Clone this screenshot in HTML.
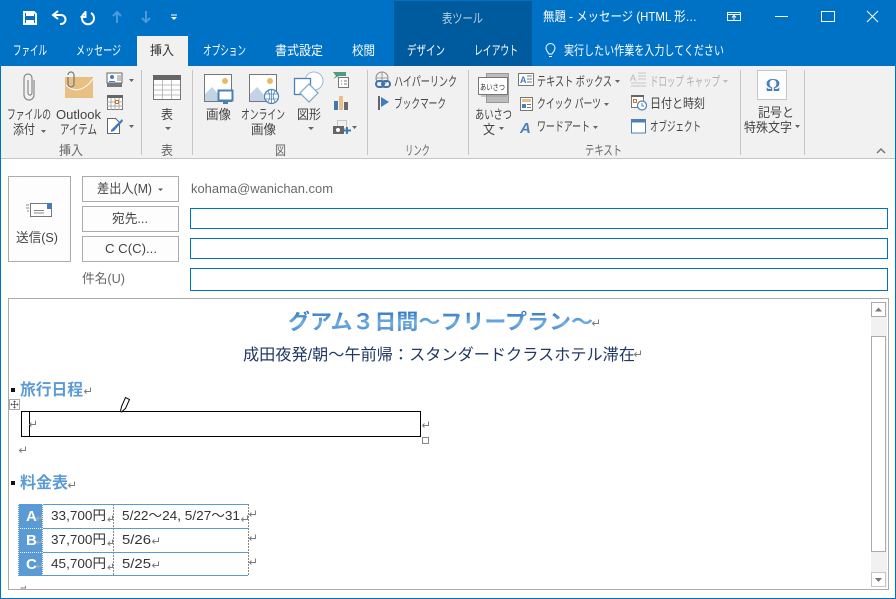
<!DOCTYPE html>
<html lang="ja"><head><meta charset="utf-8"><title>無題 - メッセージ</title>
<style>
html,body{margin:0;padding:0;background:#fff;overflow:hidden}
svg{display:block}
text{font-family:"Liberation Sans","Noto Sans CJK JP",sans-serif;font-size:13px;fill:#444;white-space:pre}
.w{fill:#fff}
.g{fill:#666}
.rm{fill:none;stroke:#7d7d7d;stroke-width:1}
</style></head><body>
<svg xmlns="http://www.w3.org/2000/svg" width="896" height="599" viewBox="0 0 896 599">
<defs>
<linearGradient id="tg" x1="0" y1="0" x2="0" y2="1"><stop offset="0" stop-color="#2a72c0"/><stop offset=".55" stop-color="#74aee2"/><stop offset="1" stop-color="#3a82ca"/></linearGradient>
</defs>
<rect width="896" height="599" fill="#fff"/>
<!-- title bar -->
<rect width="896" height="66" fill="#0072c6"/>
<rect x="394" y="1" width="138" height="65" fill="#005a9e"/>
<rect x="137" y="36" width="51" height="30" fill="#f1f1f1"/>
<!-- QAT -->
<path d="M24 12h10l2 2v10H24z" fill="none" stroke="#fff" stroke-width="2"/><rect x="26" y="11" width="8" height="5" fill="#fff"/><rect x="26" y="20" width="8" height="5" fill="#fff"/>
<path d="M58 11l-5 4 5 4M53 15h8a4.500 4.500 0 0 1 0 9h-1" fill="none" stroke="#fff" stroke-width="2"/>
<path d="M85 13a6 6 0 1 0 6 0M85.500 11v6h-5" fill="none" stroke="#fff" stroke-width="2"/>
<path d="M117 23V12M113 16l4-4 4 4" fill="none" stroke="#4c9ad6" stroke-width="2"/>
<path d="M146 11v11M142 18l4 4 4-4" fill="none" stroke="#4c9ad6" stroke-width="2"/>
<path d="M171 15h6" stroke="#fff"/><path d="M171 17h6l-3 3z" fill="#fff"/>
<text x="442" y="23" textLength="41" lengthAdjust="spacingAndGlyphs" style="fill:#b5cfe3">表ツール</text>
<text x="543" y="21" textLength="154" lengthAdjust="spacingAndGlyphs" class="w">無題 - メッセージ (HTML 形…</text>
<!-- window controls -->
<path d="M727.500 12.500h13v8h-13zM727.500 14.500h13M734 20v-4M732 17.500l2-2 2 2" fill="none" stroke="#fff"/>
<rect x="775" y="16" width="13" height="1" fill="#fff"/>
<rect x="821.500" y="11.500" width="13" height="10" fill="none" stroke="#fff" stroke-width="1"/>
<path d="M867 11l11 11M878 11l-11 11" stroke="#fff" fill="none"/>
<!-- tabs -->
<text x="13" y="55" textLength="34" lengthAdjust="spacingAndGlyphs" class="w">ファイル</text>
<text x="76" y="55" textLength="45" lengthAdjust="spacingAndGlyphs" class="w">メッセージ</text>
<text x="150" y="55" textLength="24" lengthAdjust="spacingAndGlyphs" style="fill:#333">挿入</text>
<text x="203" y="55" textLength="43" lengthAdjust="spacingAndGlyphs" class="w">オプション</text>
<text x="275" y="55" textLength="48" lengthAdjust="spacingAndGlyphs" class="w">書式設定</text>
<text x="352" y="55" textLength="23" lengthAdjust="spacingAndGlyphs" class="w">校閲</text>
<text x="407" y="55" textLength="38" lengthAdjust="spacingAndGlyphs" class="w">デザイン</text>
<text x="474" y="55" textLength="44" lengthAdjust="spacingAndGlyphs" class="w">レイアウト</text>
<path d="M549 54c-1-2-3-3-3-6a4.500 4.500 0 0 1 9 0c0 3-2 4-3 6zM549 56.500h3" fill="none" stroke="#fff"/>
<text x="564" y="55" textLength="160" lengthAdjust="spacingAndGlyphs" class="w">実行したい作業を入力してください</text>
<!-- ribbon -->
<rect y="66" width="896" height="93" fill="#f1f1f1"/>
<rect y="158" width="896" height="1" fill="#c6c6c6"/>
<g fill="#c6c6c6"><rect x="141" y="70" width="1" height="85"/><rect x="192" y="70" width="1" height="85"/><rect x="367" y="70" width="1" height="85"/><rect x="468" y="70" width="1" height="85"/><rect x="740" y="70" width="1" height="85"/><rect x="804" y="70" width="1" height="85"/></g>
<!-- ribbon text -->
<text x="7" y="119" textLength="44" lengthAdjust="spacingAndGlyphs">ファイルの</text>
<text x="13" y="134" textLength="22" lengthAdjust="spacingAndGlyphs">添付</text>
<text x="56" y="119" textLength="45" lengthAdjust="spacingAndGlyphs">Outlook</text>
<text x="60" y="134" textLength="37" lengthAdjust="spacingAndGlyphs">アイテム</text>
<text x="59" y="155" textLength="24" lengthAdjust="spacingAndGlyphs" class="g">挿入</text>
<text x="161" y="119" textLength="12" lengthAdjust="spacingAndGlyphs">表</text>
<text x="161" y="155" textLength="12" lengthAdjust="spacingAndGlyphs" class="g">表</text>
<text x="206" y="119" textLength="25" lengthAdjust="spacingAndGlyphs">画像</text>
<text x="241" y="119" textLength="44" lengthAdjust="spacingAndGlyphs">オンライン</text>
<text x="251" y="134" textLength="25" lengthAdjust="spacingAndGlyphs">画像</text>
<text x="297" y="119" textLength="24" lengthAdjust="spacingAndGlyphs">図形</text>
<text x="275" y="155" textLength="11" lengthAdjust="spacingAndGlyphs" class="g">図</text>
<text x="394" y="86" textLength="63" lengthAdjust="spacingAndGlyphs">ハイパーリンク</text>
<text x="394" y="108" textLength="52" lengthAdjust="spacingAndGlyphs">ブックマーク</text>
<text x="405" y="155" textLength="25" lengthAdjust="spacingAndGlyphs" class="g">リンク</text>
<text x="475" y="119" textLength="37" lengthAdjust="spacingAndGlyphs">あいさつ</text>
<text x="483" y="134" textLength="12" lengthAdjust="spacingAndGlyphs">文</text>
<text x="537" y="86" textLength="75" lengthAdjust="spacingAndGlyphs">テキスト ボックス</text>
<text x="537" y="108" textLength="64" lengthAdjust="spacingAndGlyphs">クイック パーツ</text>
<text x="537" y="131" textLength="53" lengthAdjust="spacingAndGlyphs">ワードアート</text>
<text x="585" y="155" textLength="37" lengthAdjust="spacingAndGlyphs" class="g">テキスト</text>
<text x="650" y="86" textLength="70" lengthAdjust="spacingAndGlyphs" style="fill:#b0b0b0">ドロップ キャップ</text>
<text x="650" y="108" textLength="55" lengthAdjust="spacingAndGlyphs">日付と時刻</text>
<text x="650" y="131" textLength="51" lengthAdjust="spacingAndGlyphs">オブジェクト</text>
<text x="758" y="117" textLength="36" lengthAdjust="spacingAndGlyphs">記号と</text>
<text x="744" y="132" textLength="48" lengthAdjust="spacingAndGlyphs">特殊文字</text>
<!-- dropdown arrows -->
<g fill="#666">
<path d="M41 130h5l-2.500 3z"/><path d="M165 127h6l-3 3z"/><path d="M129 79h5l-2.500 3z"/><path d="M129 125h5l-2.500 3z"/>
<path d="M308 127h6l-3 3z"/><path d="M352 126h5l-2.500 3z"/><path d="M499 127h5l-2.500 3z"/><path d="M615 80h5l-2.500 3z"/>
<path d="M604 103h5l-2.500 3z"/><path d="M593 126h5l-2.500 3z"/><path d="M795 125h5l-2.500 3z"/>
</g>
<path d="M723 80h5l-2.500 3z" fill="#bbb"/>
<path d="M877 153l4-4 4 4" fill="none" stroke="#777" stroke-width="1.500"/>
<!-- paperclip -->
<path d="M34 80v15a5 5 0 0 1-10 0V78a4 4 0 0 1 8 0v15a2 2 0 0 1-4 0V80" fill="none" stroke="#8a8a8a" stroke-width="1.200"/>
<!-- envelope -->
<rect x="65" y="77" width="28" height="21" fill="#e9c083"/>
<path d="M66 85c8 8 18 6 27-6" fill="none" stroke="#fff" stroke-width="1"/>
<path d="M68 75a3 3 0 0 1 6 0v9a3 3 0 0 1-6 0v-7" fill="none" stroke="#777" stroke-width="1.200"/>
<!-- card -->
<rect x="107" y="73" width="15" height="10" fill="#fff" stroke="#666"/><rect x="107" y="83" width="15" height="4" fill="#777"/><circle cx="112" cy="77" r="2" fill="#3f7cbf"/><path d="M109 81h6v1h-6z" fill="#3f7cbf"/><path d="M117 76h4M117 78h4M117 80h4" stroke="#888"/>
<!-- calendar -->
<rect x="107.500" y="95.500" width="15" height="14" fill="#fff" stroke="#777"/><rect x="107" y="95" width="16" height="3" fill="#666"/><path d="M107 102h16M107 106h16M111 98v12M115 98v12M119 98v12" stroke="#aaa"/><rect x="115.500" y="100.500" width="3" height="3" fill="#fff" stroke="#d9701c"/>
<!-- signature -->
<path d="M107.500 118.500h8l4 4v11h-12z" fill="#fff" stroke="#666"/><path d="M111 130l8-8 3-3 1 2-9 10-3 1z" fill="#3f7cbf"/>
<!-- table icon -->
<rect x="153.500" y="75.500" width="27" height="24" fill="#fff" stroke="#777"/><rect x="153" y="75" width="28" height="5" fill="#666"/>
<path d="M154 85h26M154 90h26M154 95h26M162.500 80v19M171.500 80v19" stroke="#bcbcbc"/>
<!-- pictures -->
<rect x="204.500" y="74.500" width="27" height="27" fill="#fff" stroke="#777"/><circle cx="225" cy="81" r="3" fill="#eab868"/><path d="M205 101v-7l7-7 8 9v5z" fill="#c3d3e6"/><rect x="218.500" y="90.500" width="14" height="10" fill="#fff" stroke="#4a82b8" stroke-width="2"/><path d="M223 103h5" stroke="#4a82b8" stroke-width="2"/>
<rect x="249.500" y="74.500" width="27" height="27" fill="#fff" stroke="#777"/><circle cx="270" cy="81" r="3" fill="#eab868"/><path d="M250 101v-7l7-7 8 9v5z" fill="#c3d3e6"/><circle cx="271.500" cy="96.500" r="7" fill="#fff" stroke="#4a82b8" stroke-width="1.200"/><path d="M265 94h13M265 99h13M271.500 89.500v14M267.500 90.500c3 4 3 8 0 12M275.500 90.500c-3 4-3 8 0 12" fill="none" stroke="#4a82b8" stroke-width=".8"/>
<!-- shapes -->
<circle cx="314" cy="81" r="9" fill="#fff" stroke="#9db8d6"/>
<rect x="294.500" y="78.500" width="16" height="16" fill="#fff" stroke="#4a82b8" stroke-width="1.300"/>
<path d="M309 84l9 9-9 9-9-9z" fill="#fff" stroke="#7da3c9" stroke-width="1.200"/>
<!-- smartart -->
<path d="M333 72h13v4l-7 0-6 3 3-3z" fill="#4d9a86"/><rect x="338.500" y="77.500" width="10" height="10" fill="#fff" stroke="#777"/><path d="M341 81h1M341 84h1M344 81h3M344 84h3" stroke="#777"/>
<!-- chart -->
<rect x="334" y="101" width="4" height="9" fill="#4178b4"/><rect x="339" y="96" width="4" height="14" fill="#e9c083"/><rect x="344" y="102" width="4" height="8" fill="#696969"/>
<!-- screenshot -->
<rect x="337.500" y="120.500" width="9" height="8" fill="none" stroke="#999" stroke-dasharray="1 1"/><rect x="333" y="126" width="11" height="8" fill="#666"/><circle cx="338" cy="130" r="2" fill="#fff"/><path d="M347 127v7M344 130.500h7" stroke="#3f7cbf" stroke-width="2"/>
<!-- hyperlink -->
<circle cx="382" cy="78" r="6" fill="none" stroke="#888"/><path d="M376 78h12M382 72v12" stroke="#888" stroke-width=".8"/>
<rect x="376" y="81" width="8" height="6" rx="3" fill="#f1f1f1" stroke="#3f73a8" stroke-width="2"/><rect x="382" y="81" width="8" height="6" rx="3" fill="none" stroke="#3f73a8" stroke-width="2"/>
<!-- bookmark -->
<rect x="378" y="96" width="2" height="14" fill="#666"/><path d="M381 97l8 5-8 5z" fill="#3f7cbf"/>
<!-- greeting -->
<rect x="486.500" y="73.500" width="22" height="29" fill="#bdbdbd" stroke="#999"/><rect x="478.500" y="77.500" width="29" height="17" fill="#fff" stroke="#777"/><path d="M481 96h26" stroke="#999"/>
<text x="480" y="90" textLength="25" lengthAdjust="spacingAndGlyphs" style="font-size:8px;fill:#333">あいさつ</text>
<!-- textbox -->
<rect x="518.500" y="73.500" width="15" height="12" fill="#fff" stroke="#777"/><text x="520" y="83" style="font-size:9px;fill:#3f7cbf;font-weight:bold">A</text><path d="M527 76h5M527 79h5M527 82h5" stroke="#777"/>
<!-- quick parts -->
<rect x="520.500" y="97.500" width="12" height="13" fill="#fff" stroke="#777"/><rect x="522" y="99" width="9" height="3" fill="#e9c083"/><rect x="522" y="104" width="4" height="4" fill="#4a82b8"/><path d="M527 104.500h4M527 107.500h4" stroke="#777"/>
<!-- wordart -->
<text x="520" y="133" style="font-size:15px;font-weight:bold;font-style:italic;fill:#4a82b8">A</text>
<!-- drop cap -->
<text x="630" y="81" style="font-size:9px;fill:#b5b5b5">A</text><path d="M638 73h8M638 76h8M638 79h8M631 83h15M631 86h15" stroke="#c8c8c8"/>
<!-- date -->
<rect x="631.500" y="95.500" width="12" height="12" fill="#fff" stroke="#777"/><rect x="631" y="95" width="13" height="2" fill="#666"/><rect x="633.500" y="99.500" width="3" height="3" fill="#fff" stroke="#d9701c"/><circle cx="642" cy="105.500" r="4.500" fill="#fff" stroke="#4a82b8" stroke-width="1.200"/><path d="M642 103v3h2" fill="none" stroke="#4a82b8"/>
<!-- object -->
<rect x="631.500" y="120" width="14" height="13" fill="#fff" stroke="#4a82b8"/><rect x="631" y="119" width="15" height="3.500" fill="#4a82b8"/>
<!-- omega -->
<rect x="757.500" y="70.500" width="29" height="29" fill="#fdfdfd" stroke="#c6c6c6"/>
<text x="773" y="91" text-anchor="middle" style="font-family:'Liberation Serif',serif;font-size:18px;font-weight:bold;fill:#4a7ebb">Ω</text>

<!-- form -->
<g fill="#fdfdfd" stroke="#ababab"><rect x="8.500" y="176.500" width="62" height="85"/><rect x="82.500" y="176.500" width="96" height="25"/><rect x="82.500" y="206.500" width="96" height="25"/><rect x="82.500" y="236.500" width="96" height="25"/></g>
<path d="M30.500 203.500h21v13h-21z" fill="#fff" stroke="#777"/><rect x="47" y="203" width="4" height="6" fill="#3f7cbf"/><path d="M26 205h3M26 208h3M27 211h2M34 210.500h10M34 213h10" stroke="#888"/>
<text x="16" y="242" textLength="42" lengthAdjust="spacingAndGlyphs">送信(S)</text>
<text x="97" y="193" textLength="55" lengthAdjust="spacingAndGlyphs">差出人(M)</text><path d="M158 188.500h5l-2.500 2.500z" fill="#555"/>
<text x="112" y="223" textLength="36" lengthAdjust="spacingAndGlyphs">宛先...</text>
<text x="105" y="253" textLength="52" lengthAdjust="spacingAndGlyphs">C C(C)...</text>
<text x="82" y="283" textLength="43" lengthAdjust="spacingAndGlyphs" class="g">件名(U)</text>
<text x="191" y="193" textLength="142" lengthAdjust="spacingAndGlyphs" style="fill:#6a6a6a">kohama@wanichan.com</text>
<g fill="#fff" stroke="#0072c6"><rect x="190.500" y="208.500" width="697" height="20"/><rect x="190.500" y="238.500" width="697" height="20"/><rect x="190.500" y="268.500" width="697" height="22"/></g>

<!-- document -->
<rect x="8.500" y="298.500" width="880" height="291" fill="#fff" stroke="#ababab"/>
<text x="288" y="329" textLength="305" lengthAdjust="spacingAndGlyphs" style="font-size:21px;font-weight:bold;fill:url(#tg)">グアム３日間～フリープラン～</text>
<text x="243" y="360" textLength="392" lengthAdjust="spacingAndGlyphs" style="font-size:16px;fill:#1f3864">成田夜発/朝～午前帰：スタンダードクラスホテル滞在</text>
<rect x="11" y="388" width="4" height="4" fill="#111"/>
<text x="20" y="395" textLength="63" lengthAdjust="spacingAndGlyphs" style="font-size:16px;font-weight:bold;fill:#5b9bd5">旅行日程</text>
<rect x="9.500" y="399.500" width="10" height="10" fill="#fff" stroke="#aaa"/>
<path d="M14.500 401v7M11 404.500h7M13.500 402l1-1 1 1M13.500 407l1 1 1-1M12 403.500l-1 1 1 1M17 403.500l1 1-1 1" fill="none" stroke="#555" stroke-width=".8"/>
<rect x="21.500" y="411.500" width="399" height="25" fill="#fff" stroke="#000"/><path d="M29.500 411v26" stroke="#000"/>
<rect x="422.500" y="437.500" width="6" height="6" fill="#fff" stroke="#888"/>
<path d="M120.500 411.500l1-5 4-9 4 2-4 9-4 3.500z" fill="#fff" stroke="#000"/>
<rect x="11" y="481" width="4" height="4" fill="#111"/>
<text x="20" y="488" textLength="48" lengthAdjust="spacingAndGlyphs" style="font-size:16px;font-weight:bold;fill:#5b9bd5">料金表</text>
<!-- fee table -->
<rect x="18" y="504" width="25" height="72" fill="#5b9bd5"/>
<path d="M18 504.500h230M18 528.500h230M18 552.500h230M18 575.500h230" stroke="#5b9bd5"/>
<path d="M248.500 504v72M113.500 504v72" stroke="#888" stroke-dasharray="2 1"/>
<path d="M18.500 504v72M42.500 504v72M18 528.500h25M18 552.500h25" stroke="#fff" stroke-dasharray="1 1"/>
<text x="26" y="521" style="font-size:15px;font-weight:bold;fill:#fff">A</text>
<text x="26" y="545" style="font-size:15px;font-weight:bold;fill:#fff">B</text>
<text x="26" y="569" style="font-size:15px;font-weight:bold;fill:#fff">C</text>
<text x="51" y="520" textLength="55" lengthAdjust="spacingAndGlyphs" style="font-size:13px;fill:#333">33,700円</text>
<text x="51" y="544" textLength="55" lengthAdjust="spacingAndGlyphs" style="font-size:13px;fill:#333">37,700円</text>
<text x="51" y="568" textLength="55" lengthAdjust="spacingAndGlyphs" style="font-size:13px;fill:#333">45,700円</text>
<text x="122" y="520" textLength="118" lengthAdjust="spacingAndGlyphs" style="font-size:13px;fill:#333">5/22～24, 5/27～31</text>
<text x="122" y="544" textLength="29" lengthAdjust="spacingAndGlyphs" style="font-size:13px;fill:#333">5/26</text>
<text x="122" y="568" textLength="29" lengthAdjust="spacingAndGlyphs" style="font-size:13px;fill:#333">5/25</text>
<!-- return marks -->
<g class="rm">
<path d="M598.500 319.500v4h-6M594.500 321.500l-2 2 2 2"/>
<path d="M640.500 350.500v4h-6M636.500 352.500l-2 2 2 2"/>
<path d="M90.500 387.500v4h-6M86.500 389.500l-2 2 2 2"/>
<path d="M35.500 420.500v4h-6M31.500 422.500l-2 2 2 2"/>
<path d="M428.500 421.500v4h-6M424.500 423.500l-2 2 2 2"/>
<path d="M25.500 446.500v4h-6M21.500 448.500l-2 2 2 2"/>
<path d="M74.500 481.500v4h-6M70.500 483.500l-2 2 2 2"/>
<path d="M41.500 514.500v4h-5M38.500 516.500l-2 2 2 2" stroke="#aaa"/>
<path d="M41.500 538.500v4h-5M38.500 540.500l-2 2 2 2" stroke="#aaa"/>
<path d="M41.500 562.500v4h-5M38.500 564.500l-2 2 2 2" stroke="#aaa"/>
<path d="M112.500 515.500v4h-4M110 517.500l-2 2 2 2"/>
<path d="M112.500 539.500v4h-4M110 541.500l-2 2 2 2"/>
<path d="M112.500 563.500v4h-4M110 565.500l-2 2 2 2"/>
<path d="M247.500 515.500v4h-6M243.500 517.500l-2 2 2 2"/>
<path d="M158.500 537.500v4h-6M154.500 539.500l-2 2 2 2"/>
<path d="M158.500 561.500v4h-6M154.500 563.500l-2 2 2 2"/>
<path d="M255.500 510.500v4h-6M251.500 512.500l-2 2 2 2"/>
<path d="M255.500 534.500v4h-6M251.500 536.500l-2 2 2 2"/>
<path d="M255.500 558.500v4h-6M251.500 560.500l-2 2 2 2"/>
<path d="M25.500 586v2h-5"/>
</g>
<!-- scrollbar -->
<rect x="871" y="302" width="16" height="285" fill="#f1f1f1"/>
<rect x="871.500" y="302.500" width="14" height="14" fill="#fff" stroke="#ababab"/>
<rect x="871.500" y="336.500" width="14" height="215" fill="#fff" stroke="#ababab"/>
<rect x="871.500" y="572.500" width="14" height="14" fill="#fff" stroke="#c6c6c6"/>
<path d="M875 311.500h7l-3.500-4z" fill="#777"/><path d="M875 578h7l-3.500 4z" fill="#777"/>
<!-- window border -->
<rect x="0" y="66" width="1" height="533" fill="#0072c6"/>
<rect x="895" y="66" width="1" height="533" fill="#0072c6"/>
<rect x="0" y="598" width="896" height="1" fill="#0072c6"/>
</svg>
</body></html>
